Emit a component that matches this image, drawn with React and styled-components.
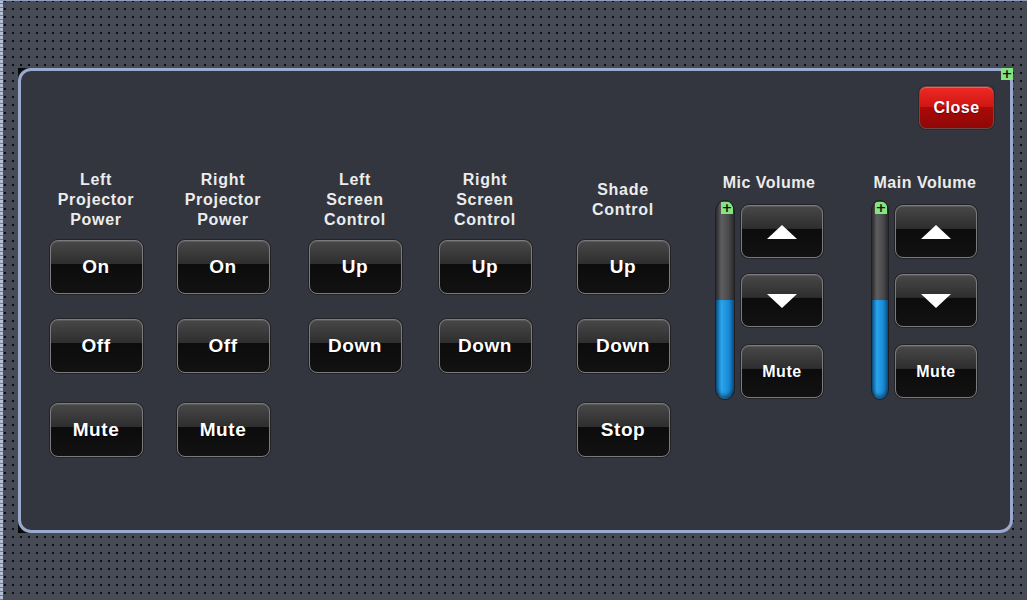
import React from "react";
import styled, { createGlobalStyle } from "styled-components";

const GlobalStyle = createGlobalStyle`
    html, body {
        margin: 0;
        padding: 0;
        background: #454a54;
    }
    body {
        font-family: "Liberation Sans", Arial, sans-serif;
    }
`;

const columns = [
    { label: ["Left", "Projector", "Power"], buttons: ["On", "Off", "Mute"] },
    { label: ["Right", "Projector", "Power"], buttons: ["On", "Off", "Mute"] },
    { label: ["Left", "Screen", "Control"], buttons: ["Up", "Down"] },
    { label: ["Right", "Screen", "Control"], buttons: ["Up", "Down"] },
    { label: ["Shade", "Control"], buttons: ["Up", "Down", "Stop"] },
];

const rowGaps = [10, 25, 30];

function Arrow({ down }) {
    return (
        <svg width="30" height="14" viewBox="0 0 30 14">
            <polygon
                points={down ? "0,0 30,0 15,14" : "15,0 30,14 0,14"}
                fill="#fff"
            />
        </svg>
    );
}

function Volume({ title, fill, slim }) {
    return (
        <VolGroup>
            <VolTitle>{title}</VolTitle>
            <VolRow>
                <Slider $slim={slim}>
                    <SliderFill style={{ height: fill + "%" }} />
                    <Marker $inset>+</Marker>
                </Slider>
                <VolButtons>
                    <Button $small>
                        <Arrow />
                    </Button>
                    <Button $small $gap={16}>
                        <Arrow down />
                    </Button>
                    <Button $small $gap={18} $text={16}>
                        Mute
                    </Button>
                </VolButtons>
            </VolRow>
        </VolGroup>
    );
}

export default function App() {
    return (
        <Page>
            <GlobalStyle />
            <Frame>
                <Panel>
                    <Marker $corner>+</Marker>
                    <Header>
                        <CloseButton>Close</CloseButton>
                    </Header>
                    <Controls>
                        {columns.map((col, i) => (
                            <Column key={i}>
                                <Label>
                                    {col.label.map((l) => (
                                        <span key={l}>{l}</span>
                                    ))}
                                </Label>
                                {col.buttons.map((b, j) => (
                                    <Button key={b} $gap={rowGaps[j]}>
                                        {b}
                                    </Button>
                                ))}
                            </Column>
                        ))}
                        <Spacer />
                        <Volume title="Mic Volume" fill={50} />
                        <Spacer />
                        <Volume title="Main Volume" fill={50} slim />
                    </Controls>
                </Panel>
            </Frame>
        </Page>
    );
}

const Page = styled.div`
    width: 1027px;
    height: 600px;
    box-sizing: border-box;
    padding: 68px 14px 0 18px;
    background-color: #464b55;
    background-image:
        linear-gradient(to bottom, #8f9dbb 0 1px, transparent 1px),
        repeating-linear-gradient(to bottom, #b4bfd6 0 3px, #6f7a92 3px 4px),
        radial-gradient(circle, #0b0c0e 0 0.8px, transparent 1px);
    background-size: 100% 100%, 3px 100%, 8px 8px;
    background-position: 0 0, 0 0, 9px 5px;
    background-repeat: no-repeat, no-repeat, repeat;
`;

const Frame = styled.div`
    width: 995px;
    height: 465px;
    background:
        linear-gradient(135deg, #000 0, #16181c 8px, transparent 9px),
        linear-gradient(45deg, #000 0, #16181c 8px, transparent 9px);
`;

const Panel = styled.div`
    position: relative;
    box-sizing: border-box;
    width: 100%;
    height: 100%;
    border: 3px solid #9aaace;
    border-radius: 13px;
    background: #33363e;
    padding: 15px 16px 0 15px;
`;

const Marker = styled.div`
    position: absolute;
    width: 12px;
    height: 12px;
    background: #84e47f;
    color: #111;
    font: bold 13px/11px "DejaVu Sans", sans-serif;
    text-align: center;
    ${(p) => p.$corner && "top: -3px; right: -3px;"}
    ${(p) => p.$inset && "top: 1px; right: 1px;"}
`;

const Header = styled.div`
    display: flex;
    justify-content: flex-end;
`;

const CloseButton = styled.div`
    width: 75px;
    height: 43px;
    box-sizing: border-box;
    display: flex;
    align-items: center;
    justify-content: center;
    border-radius: 7px;
    border: 1px solid #6d4a48;
    box-shadow: 0 0 0 1px #2a2a2c, inset 0 1px 0 #f0605c;
    background: linear-gradient(
        to bottom,
        #ee2a26 0%,
        #cf1613 48%,
        #aa0a08 49%,
        #8f0806 100%
    );
    color: #fff;
    font-weight: bold;
    font-size: 16px;
    letter-spacing: 0.5px;
    text-shadow: 0 1px 1px rgba(0, 0, 0, 0.4);
`;

const Controls = styled.div`
    display: grid;
    grid-template-columns: 126px 128px 136px 124px 152px 16px 108px 48px 108px;
    margin-top: 41px;
    margin-left: -3px;
    align-items: start;
`;

const Column = styled.div`
    display: flex;
    flex-direction: column;
    align-items: center;
`;

const Label = styled.div`
    height: 60px;
    display: flex;
    flex-direction: column;
    justify-content: center;
    align-items: center;
    color: #ececec;
    font-weight: bold;
    font-size: 16px;
    line-height: 20px;
    letter-spacing: 0.7px;
`;

const Button = styled.div`
    width: ${(p) => (p.$small ? "82px" : "93px")};
    height: ${(p) => (p.$small ? "53px" : "54px")};
    margin-top: ${(p) => p.$gap || 0}px;
    box-sizing: border-box;
    display: flex;
    align-items: center;
    justify-content: center;
    border-radius: 8px;
    border: 1px solid #7b7b7e;
    box-shadow: 0 0 0 1px #222327, inset 0 1px 0 #5a5a5a;
    background: linear-gradient(
        to bottom,
        #484848 0%,
        #2e2e2e 44%,
        #0c0c0c 45%,
        #121212 100%
    );
    color: #fff;
    font-weight: bold;
    font-size: ${(p) => p.$text || 19}px;
    letter-spacing: 0.6px;
    text-shadow: 0 1px 1px rgba(0, 0, 0, 0.6);
`;

const VolGroup = styled.div`
    display: flex;
    flex-direction: column;
`;

const VolTitle = styled.div`
    text-align: center;
    color: #ececec;
    font-weight: bold;
    font-size: 16px;
    line-height: 20px;
    letter-spacing: 0.5px;
    padding-top: 3px;
`;

const VolRow = styled.div`
    display: flex;
    margin-top: 7px;
    gap: 6px;
`;

const Slider = styled.div`
    position: relative;
    width: ${(p) => (p.$slim ? "18px" : "20px")};
    height: 200px;
    box-sizing: border-box;
    border-radius: 10px 10px 10px 10px / 12px 12px 12px 12px;
    border: 1px solid #1e1f22;
    overflow: hidden;
    background: linear-gradient(
        to right,
        #2a2a2c 0%,
        #5e5e60 30%,
        #4a4a4c 70%,
        #2a2a2c 100%
    );
    display: flex;
    flex-direction: column;
    justify-content: flex-end;
`;

const SliderFill = styled.div`
    width: 100%;
    border-radius: 0 0 10px 10px;
    background: linear-gradient(
        to right,
        #0d5d99 0%,
        #2aa6ec 30%,
        #1a8ad6 70%,
        #0d5d99 100%
    );
    box-shadow: inset 0 -3px 4px rgba(0, 30, 60, 0.6);
`;

const VolButtons = styled.div`
    display: flex;
    flex-direction: column;
    padding-top: 5px;
`;

const Spacer = styled.div``;
